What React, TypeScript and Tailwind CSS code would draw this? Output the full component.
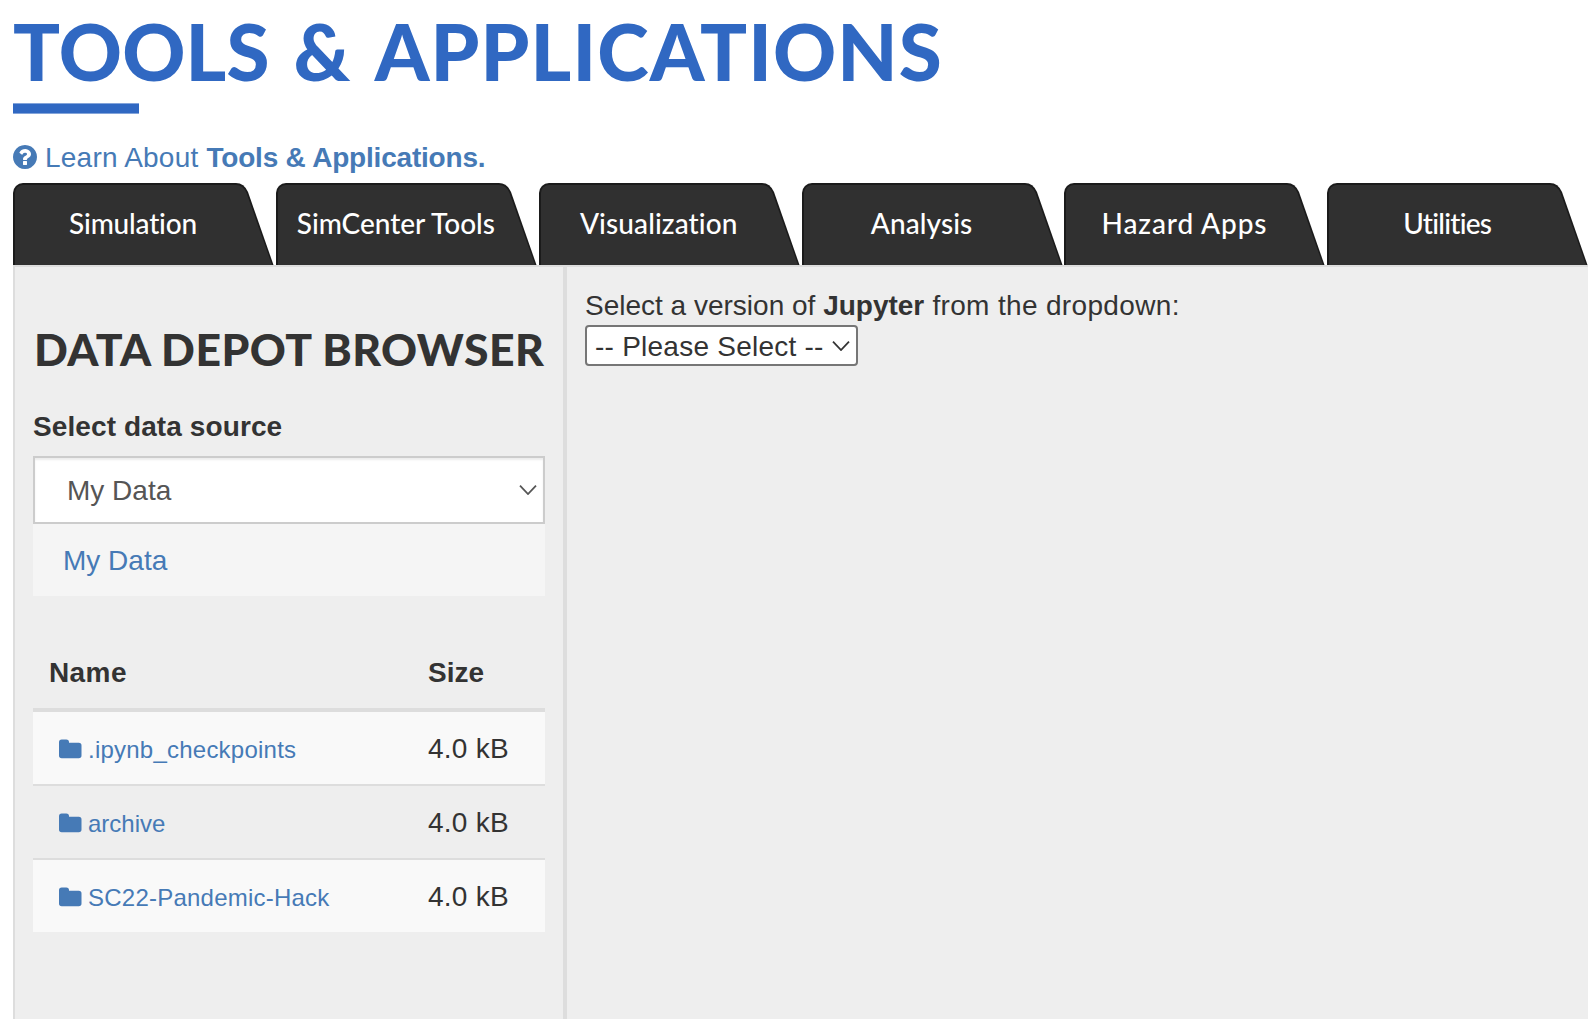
const tabs = [
  { label: 'Simulation', spacing: 'tracking-[-0.2px]' },
  { label: 'SimCenter Tools', spacing: 'tracking-[0px]' },
  { label: 'Visualization', spacing: 'tracking-[0.1px]' },
  { label: 'Analysis', spacing: 'tracking-[0.1px]' },
  { label: 'Hazard Apps', spacing: 'tracking-[0.9px]' },
  { label: 'Utilities', spacing: 'tracking-[-0.75px]' },
];

const files = [
  { name: '.ipynb_checkpoints', size: '4.0 kB', spacing: 'tracking-[0.23px]' },
  { name: 'archive', size: '4.0 kB', spacing: 'tracking-[0px]' },
  { name: 'SC22-Pandemic-Hack', size: '4.0 kB', spacing: 'tracking-[0.23px]' },
];

function QuestionIcon() {
  return (
    <svg width="24" height="24" viewBox="0 0 1536 1536" fill="currentColor" className="shrink-0">
      <path d="M896 1248v-192q0-14-9-23t-23-9H672q-14 0-23 9t-9 23v192q0 14 9 23t23 9h192q14 0 23-9t9-23zm256-672q0-88-55.500-163T958 297t-170-41q-243 0-371 213-15 24 8 42l132 100q7 6 19 6 16 0 25-12 53-68 86-92 34-24 86-24 48 0 85.500 26t37.500 59q0 38-20 61t-68 45q-63 28-115.500 86.500T640 892v36q0 14 9 23t23 9h192q14 0 23-9t9-23q0-19 21.500-49.500T972 829q32-18 49-28.500t46-35 44.500-48 28-60.500 12.500-81zm384 192q0 209-103 385.500T1153.500 1433 768 1536t-385.500-103T103 1153.500 0 768t103-385.500T382.500 103 768 0t385.500 103T1433 382.500 1536 768z" />
    </svg>
  );
}

function FolderIcon() {
  return (
    <svg width="23" height="20" viewBox="0 0 23 20" fill="currentColor" className="shrink-0">
      <path d="M0 3.200A2.700 2.700 0 0 1 2.700.500H7.300A2.700 2.700 0 0 1 10 3.200V3.800H19.800A2.700 2.700 0 0 1 22.500 6.500V16.600A2.700 2.700 0 0 1 19.800 19.300H2.700A2.700 2.700 0 0 1 0 16.600Z" />
    </svg>
  );
}

function Chevron() {
  return (
    <svg width="18" height="10" viewBox="0 0 18 10" fill="none" stroke="currentColor" strokeWidth="1.800" className="shrink-0">
      <path d="M1 .700 9 9 17 .700" />
    </svg>
  );
}

function Tab({ label, spacing }: { label: string; spacing: string }) {
  return (
    <a className="relative block h-[82px] w-[260.860px] shrink-0 text-white">
      <svg width="261" height="82" viewBox="0 0 261 82" className="absolute inset-0">
        <path d="M0 82V10A10 10 0 0 1 10 0H223Q231 0 235 9L260.500 82Z" fill="#1b1b1b" />
        <path d="M2 82V10A8 8 0 0 1 10 2H223Q230 2 233.500 10L259 82Z" fill="#303030" />
      </svg>
      <span className={`relative block w-[240px] whitespace-nowrap text-center font-['Lato',sans-serif] text-[28px] font-medium leading-[80px] [font-variant-ligatures:none] ${spacing}`}>
        {label}
      </span>
    </a>
  );
}

export default function App() {
  return (
    <div className="flex h-[1019px] w-[1588px] flex-col overflow-hidden bg-white pl-[13px] font-['Liberation_Sans',sans-serif] text-[28px] text-[#333]">
      <h1 className="h-[103px] whitespace-nowrap font-['Lato',sans-serif] text-[78px] font-black leading-[102px] text-[#3068c2]">
        <span className="tracking-[0.2px] [word-spacing:5px]">TOOLS </span>
        <span className="[word-spacing:6px]">&amp; </span>
        <span className="tracking-[1.1px]">APPLICATIONS</span>
      </h1>
      <div className="h-[11px] w-[126px] border-y border-[#83a4da] bg-[#3068c2]" />
      <a className="mt-[23px] flex h-[46px] items-start whitespace-nowrap leading-[40px] text-[#467ab6]">
        <span className="mr-[8px] mt-[8px]">
          <QuestionIcon />
        </span>
        <span className="pt-px">
          <span className="tracking-[0.22px]">Learn About </span>
          <b className="tracking-[-0.2px]">Tools &amp; Applications.</b>
        </span>
      </a>
      <nav className="flex h-[82px] gap-[2px]">
        {tabs.map((t) => (
          <Tab key={t.label} {...t} />
        ))}
      </nav>
      <main className="flex flex-1 border-l-2 border-t-2 border-[#ddd] bg-[#eee]">
        <aside className="w-[552px] shrink-0 border-r-4 border-[#ddd] pl-[18px] pr-[18px]">
          <h2 className="mt-[52px] h-[61px] whitespace-nowrap pl-[1px] font-['Lato',sans-serif] text-[44.500px] font-black leading-[60px] tracking-[0.44px]">
            DATA DEPOT BROWSER
          </h2>
          <label className="mt-[26px] block h-[50px] font-bold leading-[42px] tracking-[0.1px]">Select data source</label>
          <div className="flex h-[68px] items-center justify-between border-2 border-[#ccc] bg-white pl-[32px] pr-[6px] text-[#555] shadow-[inset_0_2px_2px_rgba(0,0,0,0.075)]">
            <span className="pt-[2px]">My Data</span>
            <Chevron />
          </div>
          <div className="h-[72px] bg-[#f5f5f5] pl-[30px] leading-[74px] text-[#467ab6]">My Data</div>
          <div className="mt-[40px] flex h-[76px] border-b-4 border-[#ddd] font-bold leading-[74px]">
            <span className="w-[395px] pl-[16px] tracking-[0.4px]">Name</span>
            <span>Size</span>
          </div>
          <div className="divide-y-2 divide-[#ddd]">
            {files.map((f) => (
              <div key={f.name} className="flex h-[74px] leading-[74px] odd:bg-[#f9f9f9] last:h-[72px]">
                <a className="flex w-[395px] items-center gap-[6px] pl-[26px] text-[24px] text-[#467ab6]">
                  <span className="pt-[2px]">
                    <FolderIcon />
                  </span>
                  <span className={`pt-[4px] ${f.spacing}`}>{f.name}</span>
                </a>
                <span className="tracking-[0.25px]">{f.size}</span>
              </div>
            ))}
          </div>
        </aside>
        <section className="pl-[18px] pt-[18px]">
          <p className="h-[40px] whitespace-nowrap leading-[42px]">
            Select a version of <b>Jupyter</b>
            <span className="tracking-[0.34px]"> from the dropdown:</span>
          </p>
          <div className="flex h-[41px] w-[273px] items-center justify-between rounded-[4px] border-2 border-[#767676] bg-white pl-[8px] pr-[6px]">
            <span className="whitespace-nowrap pt-[2px] tracking-[0.24px]">-- Please Select --</span>
            <Chevron />
          </div>
        </section>
      </main>
    </div>
  );
}
